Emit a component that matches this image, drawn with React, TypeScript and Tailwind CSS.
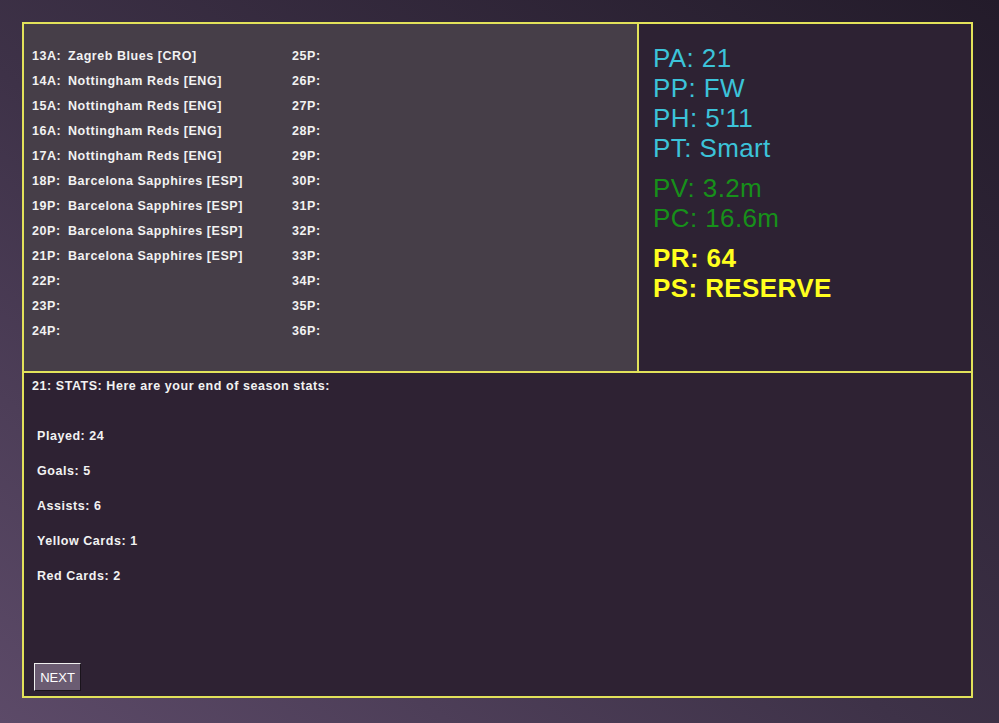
import React from "react";

const left = [
  ["13A:", "Zagreb Blues [CRO]"],
  ["14A:", "Nottingham Reds [ENG]"],
  ["15A:", "Nottingham Reds [ENG]"],
  ["16A:", "Nottingham Reds [ENG]"],
  ["17A:", "Nottingham Reds [ENG]"],
  ["18P:", "Barcelona Sapphires [ESP]"],
  ["19P:", "Barcelona Sapphires [ESP]"],
  ["20P:", "Barcelona Sapphires [ESP]"],
  ["21P:", "Barcelona Sapphires [ESP]"],
  ["22P:", ""],
  ["23P:", ""],
  ["24P:", ""],
];
const right = ["25P:", "26P:", "27P:", "28P:", "29P:", "30P:", "31P:", "32P:", "33P:", "34P:", "35P:", "36P:"];

export default function App() {
  return (
    <div
      className="w-[999px] h-[723px] pt-[22px] pl-[22px] bg-[linear-gradient(to_top_right,#5c4a68_0%,#3e3248_45%,#231b2a_100%)] text-[#f2f2f2]"
      style={{ fontFamily: '"Liberation Sans", Arial, sans-serif' }}
    >
      <div className="w-[951px] h-[676px] border-2 border-[#e2e25a] flex flex-col">
        <div className="h-[349px] flex border-b-2 border-[#e2e25a]">
          <div className="w-[615px] bg-[#463e48] border-r-2 border-[#e2e25a] pt-[20px] pl-[8px] flex text-[12.5px] font-bold tracking-[0.55px]">
            <div className="w-[260px] flex flex-col">
              {left.map(([a, b]) => (
                <div key={a} className="h-[25px] leading-[25px] flex">
                  <span className="w-[36px]">{a}</span>
                  <span>{b}</span>
                </div>
              ))}
            </div>
            <div className="flex flex-col">
              {right.map((a) => (
                <div key={a} className="h-[25px] leading-[25px]">{a}</div>
              ))}
            </div>
          </div>
          <div className="flex-1 bg-[#2d2233] pt-[19px] pl-[14px] text-[26px] tracking-[0.4px]">
            <div className="text-[#3cc3d9] leading-[30px]">
              <div>PA: 21</div>
              <div>PP: FW</div>
              <div>PH: 5'11</div>
              <div>PT: Smart</div>
            </div>
            <div className="text-[#17901a] leading-[30px] mt-[10px]">
              <div>PV: 3.2m</div>
              <div>PC: 16.6m</div>
            </div>
            <div className="text-[#ffff1e] font-bold leading-[30px] mt-[10px]">
              <div>PR: 64</div>
              <div>PS: RESERVE</div>
            </div>
          </div>
        </div>
        <div className="flex-1 bg-[#2e2233] pl-[8px] pt-[3px] flex flex-col text-[12.5px] font-bold tracking-[0.55px]">
          <div className="leading-[20px]">21: STATS: Here are your end of season stats:</div>
          <div className="mt-[23px] pl-[5px] flex flex-col">
            <div className="h-[35px] leading-[35px]">Played: 24</div>
            <div className="h-[35px] leading-[35px]">Goals: 5</div>
            <div className="h-[35px] leading-[35px]">Assists: 6</div>
            <div className="h-[35px] leading-[35px]">Yellow Cards: 1</div>
            <div className="h-[35px] leading-[35px]">Red Cards: 2</div>
          </div>
          <div className="mt-auto mb-[5px] pl-[2px]">
            <button className="w-[47px] h-[28px] bg-[#6b5c72] border border-t-[#f0f0f0] border-l-[#f0f0f0] border-r-[#1a141c] border-b-[#1a141c] text-[13px] font-normal tracking-normal text-white leading-none">
              NEXT
            </button>
          </div>
        </div>
      </div>
    </div>
  );
}
